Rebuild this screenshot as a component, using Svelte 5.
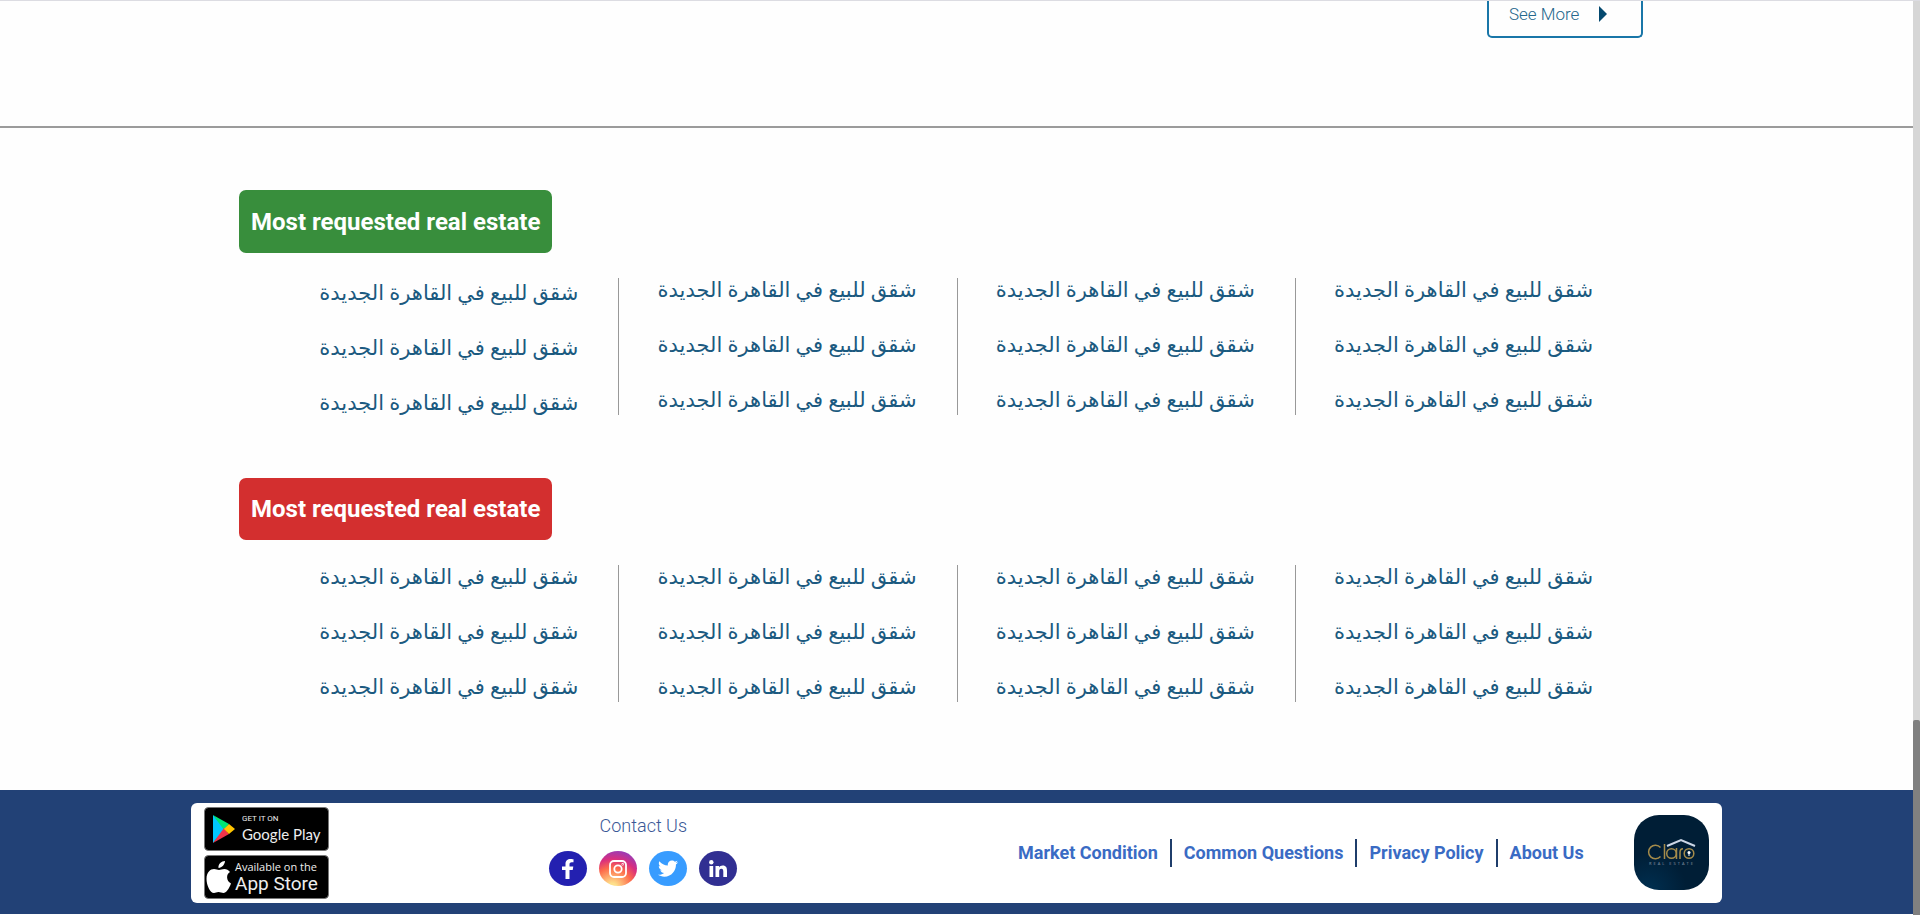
<script>
  const label = 'شقق للبيع في القاهرة الجديدة';
  const groups = [
    { tone: 'green', title: 'Most requested real estate' },
    { tone: 'red', title: 'Most requested real estate' }
  ];
  const columns = [0, 1, 2, 3];
  const rows = [0, 1, 2];
  const links = ['Market Condition', 'Common Questions', 'Privacy Policy', 'About Us'];
</script>

<div class="shell">
  <div class="page">
    <div class="more-row">
      <button class="more" type="button">
        <span>See More</span>
        <svg width="8" height="16" viewBox="0 0 8 16" aria-hidden="true"><path d="M0 0L8 8L0 16Z" fill="#04496f" /></svg>
      </button>
    </div>

    <main>
      {#each groups as group}
        <section class={group.tone}>
          <h2>{group.title}</h2>
          <div class="columns">
            {#each columns as column}
              <ul dir="rtl">
                {#each rows as row}
                  <li><a href="#list">{label}</a></li>
                {/each}
              </ul>
            {/each}
          </div>
        </section>
      {/each}
    </main>

    <footer>
      <div class="card">
        <div class="stores">
          <a href="#play" aria-label="Google Play">
            <svg width="125" height="44" viewBox="0 0 125 44">
              <rect x="0.5" y="0.5" width="124" height="43" rx="4" fill="#000" stroke="#777" />
              <path d="M9 8L21 22L9 36Z" fill="#00c8ff" />
              <path d="M9 8L25 17L20 23Z" fill="#00e676" />
              <path d="M9 36L25 27L20 21Z" fill="#f0344a" />
              <path d="M25 17L31 22L25 27L20 22Z" fill="#ffc400" />
              <text x="38" y="14" font-size="8" class="get">GET IT ON</text>
              <text x="38" y="33" font-size="15" class="play">Google Play</text>
            </svg>
          </a>
          <a href="#app" aria-label="App Store">
            <svg width="125" height="44" viewBox="0 0 125 44">
              <rect x="0.5" y="0.5" width="124" height="43" rx="4" fill="#000" stroke="#777" />
              <path d="M21 6C21 9 18 13 14.500 13C14 9 17.500 6 21 6ZM26 17C22 19 22 26 27 28.500C25 34 22 38 19.500 38C17.500 38 16.500 37 14.500 37C12.500 37 11.500 38 10 38C6 38 2.500 30 2.500 24C2.500 17 6.500 14 10 14C12 14 13.500 15 15 15C16.500 15 18 14 20.500 14C22.500 14 24.500 15 26 17Z" fill="#fff" />
              <text x="31" y="16" font-size="11">Available on the</text>
              <text x="31" y="35" font-size="19" class="store">App Store</text>
            </svg>
          </a>
        </div>

        <div class="contact">
          <p>Contact Us</p>
          <div class="social">
            <a class="facebook" href="#facebook" aria-label="Facebook">
              <svg width="12" height="20" viewBox="0 0 12 20"><path d="M3.500 20V11H0V7.500H3.500V5C3.500 1.500 5.500 0 8.500 0C10 0 11.500 .3 11.500 .3V3.300H9.800C8 3.300 7.500 4.300 7.500 5.500V7.500H11.300L10.700 11H7.500V20Z" fill="#fff" /></svg>
            </a>
            <a class="instagram" href="#instagram" aria-label="Instagram">
              <svg width="18" height="18" viewBox="0 0 18 18" fill="none" stroke="#fff" stroke-width="1.800"><rect x="1" y="1" width="16" height="16" rx="4" /><circle cx="9" cy="9" r="3.700" /><circle cx="13.700" cy="4.300" r=".3" /></svg>
            </a>
            <a class="twitter" href="#twitter" aria-label="Twitter">
              <svg width="20" height="17" viewBox="0 0 512 420"><path d="M459.400 106c.3 4.500.3 9.100.3 13.600 0 138.700-105.600 298.600-298.600 298.600-59.500 0-114.700-17.200-161.100-47.100 8.400 1 16.600 1.300 25.300 1.300 49 0 94.200-16.600 130.300-44.800-46.100-1-84.800-31.200-98.100-72.800 6.500 1 13 1.600 19.800 1.600 9.400 0 18.800-1.300 27.600-3.600-48-9.700-84.100-52-84.100-103v-1.300c14 7.800 30.200 12.700 47.400 13.300-28.300-18.800-46.800-51-46.800-87.400 0-19.500 5.200-37.400 14.300-53C87.400 84.400 165.400 127.300 253 131.800c-1.600-7.800-2.600-15.900-2.600-24C250.400 50 297.100 3 355.300 3c30.200 0 57.500 12.700 76.700 33.100 23.700-4.500 46.500-13.300 66.600-25.300-7.800 24.400-24.400 44.800-46.100 57.800 21.100-2.300 41.600-8.100 60.400-16.200-14.300 20.800-32.200 39.300-52.600 54z" fill="#fff" /></svg>
            </a>
            <a class="linkedin" href="#linkedin" aria-label="LinkedIn">
              <svg width="18" height="17" viewBox="0 0 18 17" fill="#fff"><circle cx="2.300" cy="2.200" r="2.200" /><path d="M.5 6H4.200V17H.5ZM6.500 6H10V7.500C10.700 6.300 12 5.600 13.700 5.600C17.200 5.600 18 8 18 11V17H14.300V11.700C14.300 10.200 14.100 8.700 12.400 8.700C10.600 8.700 10.200 10 10.200 11.600V17H6.500Z" /></svg>
            </a>
          </div>
        </div>

        <nav>
          {#each links as link}
            <a href="#page">{link}</a>
          {/each}
        </nav>

        <svg class="logo" width="75" height="75" viewBox="0 0 75 75" role="img" aria-label="Claro Real Estate">
          <defs><radialGradient id="glow" cx="0.200" cy="1" r="0.500"><stop stop-color="#002f50" /><stop offset="1" stop-color="#001e36" /></radialGradient></defs>
          <rect width="75" height="75" rx="25" fill="url(#glow)" />
          <g fill="none" stroke="#a58c4b" stroke-width="1.500">
            <path d="M26.500 32.500A6.800 6.800 0 1 0 26.500 41.500M30.500 29V44" />
            <circle cx="37.500" cy="38.500" r="4.800" /><path d="M42.500 33V44M46 44V37.500Q46 33.800 49 33.800" />
            <circle cx="55" cy="38.500" r="4.800" />
          </g>
          <path d="M33 31L47 25L61 31" fill="none" stroke="#cbd6e6" stroke-width="2" />
          <circle cx="55" cy="37.500" r="1.500" fill="#fff" /><path d="M54.500 37H55.500V41H54.500Z" fill="#fff" />
          <text x="15" y="50" font-size="4" class="tagline">REAL ESTATE</text>
        </svg>
      </div>
    </footer>
  </div>
  <div class="scrollbar"><div class="thumb"></div></div>
</div>

<style>
  :global(body) { background: #fefefe; }
  .shell {
    display: grid;
    grid-template-columns: minmax(0, 1fr) 7px;
    min-height: 100vh;
    box-sizing: border-box;
    border-top: 1px solid #dcdce2;
    font-family: Roboto, "DejaVu Sans", sans-serif;
  }
  .page { padding-bottom: 1px; }
  a { color: inherit; text-decoration: none; }
  .more-row {
    display: flex;
    justify-content: flex-end;
    height: 125px;
    padding-right: 270px;
    border-bottom: 2px solid #9b9b9b;
  }
  .more {
    display: flex;
    align-items: center;
    gap: 20px;
    width: 156px;
    height: 37px;
    box-sizing: border-box;
    padding: 0 20px 10px;
    border: 2px solid #1976a8;
    border-top: 0;
    border-radius: 0 0 5px 5px;
    background: none;
    color: #25678c;
    font: 300 17px/24px Roboto, sans-serif;
  }
  main { padding: 62px 0 88px; }
  section { padding: 0 280px; }
  section + section { margin-top: 63px; }
  h2 {
    width: max-content;
    margin: 0 0 25px -41px;
    padding: 1px 12px 0;
    border-radius: 7px;
    color: #fff;
    font-size: 24px;
    font-weight: 700;
    line-height: 62px;
  }
  .green h2 { background: #388e3c; }
  .red h2 { padding-top: 0; background: #d32f2f; }
  .columns {
    display: grid;
    grid-template-columns: repeat(4, 1fr);
  }
  ul {
    display: grid;
    gap: 31px;
    min-width: 0;
    margin: 0;
    padding: 0 40px 3px;
    list-style: none;
    color: #1b5a80;
    font: 21px/24px Roboto, "DejaVu Sans", sans-serif;
    white-space: nowrap;
  }
  .columns ul + ul { border-left: 1px solid #999; }
  .green ul:first-child { padding: 3px 40px 0; }
  footer { padding: 13px 10% 11px; background: #224176; }
  .card {
    display: flex;
    align-items: center;
    height: 100px;
    box-sizing: border-box;
    padding: 0 13px 1px;
    border-radius: 6px;
    background: #fff;
  }
  .stores { display: grid; gap: 4px; }
  .stores svg { display: block; }
  text { fill: #eee; font-family: "Open Sans", sans-serif; }
  .get, .store { font-family: Roboto, sans-serif; }
  .play { font-family: Lato, sans-serif; }
  .contact { margin-left: 220px; padding-bottom: 6px; }
  .contact p {
    margin: 0 0 12px;
    color: #3a5896;
    font-size: 18px;
    font-weight: 300;
    line-height: 26px;
    text-align: center;
  }
  .social { display: flex; gap: 12px; }
  .social a {
    display: grid;
    place-items: center;
    width: 38px;
    height: 35px;
    border-radius: 50%;
  }
  .facebook { background: #2320b0; }
  .instagram { background: radial-gradient(circle at 35% 105%, #fee08b 10%, #fd6b4b 45%, #d92e7f 65%, #6b45dd 100%); }
  .twitter { background: #389cff; }
  .linkedin { background: #312f92; }
  nav {
    display: flex;
    margin: 0 38px 0 auto;
    color: #3a6bc4;
    font-size: 18px;
    font-weight: 700;
    line-height: 28px;
  }
  nav a { padding: 0 12px; }
  nav a + a { border-left: 2px solid #1f3d6b; }
  .logo { flex: none; }
  .tagline { fill: #8a95a5; letter-spacing: 2px; }
  .scrollbar {
    display: flex;
    align-items: flex-end;
    background: #d6d6d6;
  }
  .thumb { width: 100%; height: 195px; border-radius: 2px 2px 0 0; background: #808080; }
</style>
